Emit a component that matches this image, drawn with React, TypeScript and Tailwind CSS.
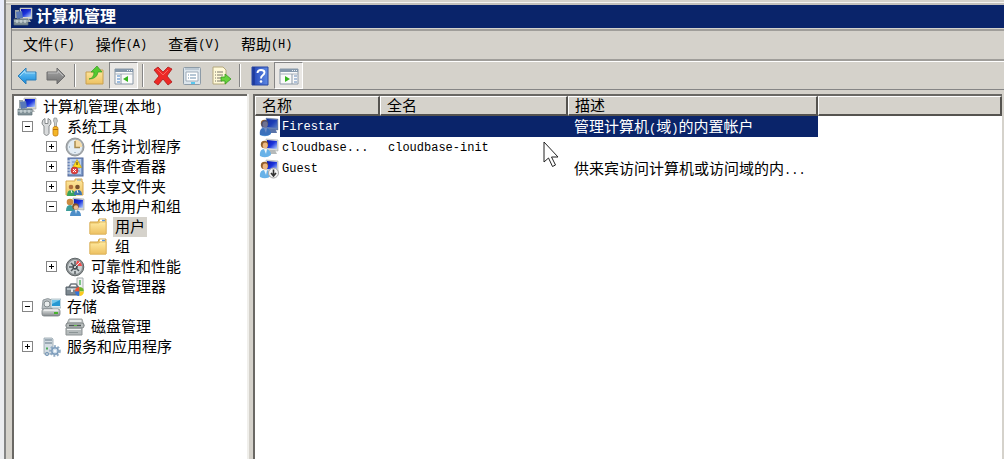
import type { ReactNode } from 'react'

const latin = "font-['Liberation_Mono','Noto_Sans_CJK_SC',monospace] text-[12px] leading-none"

function Svg({ children }: { children: ReactNode }) {
  return (
    <svg className="size-5 shrink-0" viewBox="0 0 20 20" fill="none" aria-hidden="true">
      {children}
    </svg>
  )
}

/* shared gradients */
function Defs() {
  return (
    <svg className="absolute size-0" aria-hidden="true">
      <defs>
        <linearGradient id="screen" x1="0" y1="0" x2="1" y2="1">
          <stop offset="0" stopColor="#0a14a8" />
          <stop offset=".5" stopColor="#1c34dc" />
          <stop offset="1" stopColor="#b8d4ff" />
        </linearGradient>
        <linearGradient id="blueArrow" x1="0" y1="0" x2="0" y2="1">
          <stop offset="0" stopColor="#7fd0f8" />
          <stop offset="1" stopColor="#1288dc" />
        </linearGradient>
        <linearGradient id="grayArrow" x1="0" y1="0" x2="0" y2="1">
          <stop offset="0" stopColor="#a8a8a8" />
          <stop offset="1" stopColor="#727272" />
        </linearGradient>
        <linearGradient id="folder" x1="0" y1="0" x2="0" y2="1">
          <stop offset="0" stopColor="#ffeaa0" />
          <stop offset="1" stopColor="#edc162" />
        </linearGradient>
        <linearGradient id="help" x1="0" y1="0" x2="1" y2="0">
          <stop offset="0" stopColor="#1d3aa0" />
          <stop offset=".2" stopColor="#2c50c0" />
          <stop offset="1" stopColor="#5f8ae4" />
        </linearGradient>
        <linearGradient id="metal" x1="0" y1="0" x2="0" y2="1">
          <stop offset="0" stopColor="#e8eaea" />
          <stop offset="1" stopColor="#848a8c" />
        </linearGradient>
      </defs>
    </svg>
  )
}

function ComputerIcon() {
  return (
    <Svg>
      <path d="M2 3h4v8H2z" fill="#9aa4a8" />
      <path d="M7 1l12 0v11L7 12z" fill="#d8d8d0" stroke="#a4a8a8" strokeWidth=".6" />
      <path d="M8 2l10 0v8L8 10z" fill="url(#screen)" />
      <path d="M10 12h6l2 3H9z" fill="#b8bcbc" />
      <path d="M3 5l6-1 1 7-6 1z" fill="#5878b8" />
      <path d="M1 12h14v6H1z" fill="#829298" stroke="#5e7076" strokeWidth=".7" />
      <path d="M1 14h14" stroke="#c8d4d8" />
      <path d="M4 13v3M8 13v3M12 13v3" stroke="#dce4e4" />
    </Svg>
  )
}

function ToolsIcon() {
  return (
    <Svg>
      <path
        d="M4 1.500v5h3v-5q3.500 1 3 4.500-.3 2-2 3v7.500q-2.500 4-5 0V9Q1 8 1 6q0-3.500 3-4.500z"
        fill="#d8dadb"
        stroke="#85898b"
      />
      <path d="M13 1h2.500l1 3-1 2v4h-2V6l-1-2z" fill="#c8cccc" stroke="#8a8e90" strokeWidth=".7" />
      <rect x="12" y="9.500" width="5" height="9.500" rx="2" fill="#f4b628" stroke="#c47c0c" strokeWidth=".8" />
      <path d="M12 12.500h5" stroke="#b87010" />
    </Svg>
  )
}

function ClockIcon() {
  return (
    <Svg>
      <circle cx="10" cy="10" r="9" fill="#a6acb0" stroke="#85898c" strokeWidth=".8" />
      <circle cx="10" cy="10" r="7.300" fill="#e4edf4" />
      <path d="M10 10V2.700a7.300 7.300 0 0 1 7.300 7.300z" fill="#f6dca6" />
      <path d="M10 4v6.500h5" stroke="#a88b50" strokeWidth="1.500" />
      <path d="M10 15v1M4 10h1" stroke="#7e98ac" />
    </Svg>
  )
}

function EventIcon() {
  return (
    <Svg>
      <rect x="3" y="1" width="15" height="18" fill="#7d99c8" stroke="#53699a" />
      <path d="M5 2h11v15H5z" fill="#bcd0ee" />
      <path d="M7 5h8M7 8h8M7 11h8M7 14h8" stroke="#7590c0" />
      <path d="M2 4h4M2 7h4M2 10h4M2 13h4M2 16h4" stroke="#e4e8ee" />
      <path d="M12 2.500l4.500 8h-9z" fill="#ffe020" stroke="#c89d10" strokeWidth=".7" />
      <path d="M12 5v3" stroke="#403000" />
      <circle cx="9.500" cy="13.500" r="3.500" fill="#e04444" stroke="#b02828" strokeWidth=".6" />
      <path d="M8 12l3 3M11 12l-3 3" stroke="#fff" />
    </Svg>
  )
}

function SharedIcon() {
  return (
    <Svg>
      <path d="M1 4h9V2h7v3h1v13H1z" fill="url(#folder)" stroke="#d7a74c" />
      <path d="M12 3h4" stroke="#699bd0" />
      <circle cx="6" cy="10" r="2.300" fill="#b06e3c" />
      <path d="M2 19q0-6 4-6t5 6z" fill="#39a35c" />
      <circle cx="12.500" cy="10" r="2.300" fill="#76502e" />
      <path d="M9 18q0-5 4-5t4 5z" fill="#3b76b4" />
      <path d="M6 13l1 3M12 13l1 3" stroke="#f4f4e8" />
    </Svg>
  )
}

function GroupIcon() {
  return (
    <Svg>
      <path d="M8 1l11 1v11l-11-1z" fill="#d4d6d4" stroke="#a0a4a4" strokeWidth=".6" />
      <path d="M9 2l9 1v8l-9-1z" fill="url(#screen)" />
      <circle cx="5" cy="5" r="3.300" fill="#cb8b42" />
      <path d="M1 14q0-6 4-6t5 6z" fill="#3b9c9a" />
      <circle cx="10.500" cy="9.500" r="3.200" fill="#84552e" />
      <circle cx="11" cy="10.500" r="2.200" fill="#efbd91" />
      <path d="M5 19q0-6 5.500-6t5.500 6z" fill="#4d8ec8" />
      <path d="M10 13l1 4 1-4z" fill="#eef4f8" />
    </Svg>
  )
}

function FolderIcon() {
  return (
    <Svg>
      <path d="M1 5h8l1-3h7v15H1z" fill="#f3cd70" stroke="#d3a548" />
      <path d="M11 3.500h5" stroke="#fff" strokeWidth="2" />
      <path d="M13 3.500h3" stroke="#5d98dc" strokeWidth="1.500" />
      <path d="M1 6h9l1-1h6v12H1z" fill="url(#folder)" stroke="#e0b65b" strokeWidth=".8" />
    </Svg>
  )
}

function GaugeIcon() {
  return (
    <Svg>
      <circle cx="10" cy="10" r="8.800" fill="#8b9193" stroke="#5e6466" />
      <circle cx="10" cy="10" r="7" fill="#ccd2d4" />
      <path d="M12 3.500a7 7 0 0 1 5 5.500h-4l-2-2z" fill="#f34c4c" />
      <path d="M10 4v3M4 10h3M6 6l2 2M6 14l2-2M10 17v-3M14 14l-2-2" stroke="#535b5f" strokeWidth="1.500" />
      <circle cx="10" cy="10" r="2.800" fill="#454c50" />
      <path d="M9 11l6-6" stroke="#e8ecec" />
      <circle cx="10" cy="10" r="1" fill="#d0d6d8" />
    </Svg>
  )
}

function DeviceIcon() {
  return (
    <Svg>
      <path d="M12 1h6v12h-6z" fill="#eef0f0" stroke="#a9afb2" />
      <path d="M15 3v5" stroke="#54b765" strokeWidth="1.500" />
      <path d="M4 10l2-3h5l2 3" stroke="#727a80" strokeWidth="1.500" />
      <path d="M1 10h13v8H1z" fill="#7d8890" stroke="#566068" />
      <path d="M2 11h11v2H2z" fill="#b3bdc4" />
      <path d="M7 12v3" stroke="#e9eded" strokeWidth="2" />
      <path d="M14.500 14.500V10a4.500 4.500 0 0 0-4.500 4.500z" fill="#ef5533" />
      <path d="M14.500 14.500V10a4.500 4.500 0 0 1 4.500 4.500z" fill="#6cb52d" />
      <path d="M14.500 14.500H10a4.500 4.500 0 0 0 4.500 4.500z" fill="#3375d8" />
      <path d="M14.500 14.500H19a4.500 4.500 0 0 1-4.500 4.500z" fill="#fbc91e" />
    </Svg>
  )
}

function StorageIcon() {
  return (
    <Svg>
      <path d="M2 3q5-3 9 0v9H1z" fill="#b8bfc2" stroke="#858e92" strokeWidth=".8" />
      <circle cx="6" cy="7" r="3" fill="#e8ecec" stroke="#838b8e" />
      <path d="M10 2h10v9H10z" fill="#dceaf0" stroke="#8aa4af" strokeWidth=".6" />
      <path d="M11 3h8v6h-8z" fill="#2498d2" />
      <path d="M11 3h8l-8 4z" fill="#72c8ed" />
      <rect x="1" y="12" width="18" height="7" rx="2" fill="url(#metal)" stroke="#777f81" strokeWidth=".8" />
      <path d="M3 13h14" stroke="#fff" />
      <path d="M13 16h4" stroke="#48b32e" strokeWidth="2" />
    </Svg>
  )
}

function DiskIcon() {
  return (
    <Svg>
      <path d="M4 2h13l2 7H1z" fill="#c9cdcd" stroke="#8a9090" strokeWidth=".8" />
      <path d="M5 4h11" stroke="#f3f5f5" strokeWidth="1.500" />
      <rect x="1" y="6" width="18" height="5" rx="2" fill="#b8bdbd" stroke="#7d8384" />
      <path d="M4 8.500h12" stroke="#4d5556" strokeWidth="1.500" />
      <path d="M9 8.500h3" stroke="#65c246" />
      <path d="M1 11h16v7H1z" fill="#b4babb" stroke="#8b9192" />
      <path d="M2 12.500h14" stroke="#eff1f1" />
      <path d="M4 15.500h9" stroke="#8b9495" />
    </Svg>
  )
}

function ServicesIcon() {
  return (
    <Svg>
      <path d="M3 1h8l1 1v15H3z" fill="#d4dde3" stroke="#95a3ac" strokeWidth=".8" />
      <path d="M4 3h7M4 6h7" stroke="#647987" />
      <path d="M5 11.500h2" stroke="#4aab58" strokeWidth="2" />
      <circle cx="14" cy="14" r="4.800" stroke="#8faac4" strokeWidth="2" strokeDasharray="2 1.500" />
      <circle cx="14" cy="14" r="3.200" fill="#d3e1ed" stroke="#7d9cbb" strokeWidth="1.500" />
      <circle cx="14" cy="14" r="1" fill="#fff" />
      <circle cx="6" cy="17" r="1.700" fill="#b2c4d2" stroke="#7d9cbb" />
    </Svg>
  )
}

function UserIcon({ kind }: { kind?: 'selected' | 'disabled' }) {
  return (
    <Svg>
      <path d="M7 1l12 1v11L7 12z" fill="#d8dad8" stroke="#a8acac" strokeWidth=".6" />
      <path d="M8 2l10 1v8L8 10z" fill="url(#screen)" />
      <path d="M11 12h5l2 4h-8z" fill="#b5b9b9" />
      <circle cx="5.500" cy="6.500" r="3.700" fill="#94602c" />
      <ellipse cx="6.200" cy="7.500" rx="2.500" ry="3" fill="#edb780" />
      <path d="M1 18q-1-7 5-7 6 0 6 6-5 4-11 1z" fill="#68b2e8" />
      <path d="M5 11l2 5 1-5z" fill="#f1f7fb" />
      {kind === 'selected' && (
        <path
          d="M7 1l12 1v11l-2 0 1 3h-6q-1 4-11 2-1-5 2-7-2-5 1-7l3-1z"
          fill="#1c449c"
          fillOpacity=".6"
        />
      )}
      {kind === 'disabled' && (
        <>
          <circle cx="14.500" cy="14" r="5" fill="#f2f2f2" stroke="#a7a7a7" />
          <path d="M14.500 10.500v6M12 14l2.500 3 2.500-3" stroke="#333" strokeWidth="1.600" />
        </>
      )}
    </Svg>
  )
}

function PanelIcon({ right }: { right?: boolean }) {
  return (
    <Svg>
      <path d="M1 3h18v15H1z" fill="#fafafa" stroke="#8a98a6" />
      <path d="M1 3h18v3H1z" fill="#8598ab" />
      <path d="M1 8h18" stroke="#a8b2bc" />
      <path d="M13 4.500h1M15 4.500h1M17 4.500h1" stroke="#e8eef4" />
      {right ? (
        <>
          <path d="M13 8v10" stroke="#8a98a6" />
          <path d="M15 10h3M15 13h3M15 16h3" stroke="#6488b8" />
          <path d="M6 10v6l5-3z" fill="#36b51e" />
        </>
      ) : (
        <>
          <path d="M7 8v10" stroke="#8a98a6" />
          <path d="M3 10h3M3 13h3M3 16h3" stroke="#3f7fc4" />
          <path d="M14 10v6l-5-3z" fill="#36b51e" />
        </>
      )}
    </Svg>
  )
}

function ToolButton({ label, pressed, children }: { label: string; pressed?: boolean; children: ReactNode }) {
  return (
    <button
      type="button"
      aria-label={label}
      className={
        'flex h-[27px] w-[29px] items-center justify-center border ' +
        (pressed
          ? 'border-t-[#858585] border-l-[#858585] border-r-white border-b-white bg-[#e9e7e4]'
          : 'border-transparent')
      }
    >
      {children}
    </button>
  )
}

function Separator() {
  return (
    <div className="flex w-[10px] justify-center">
      <div className="h-[23px] w-[2px] border-l border-[#858585] bg-white" />
    </div>
  )
}

type Node = { name: ReactNode; icon: ReactNode; open?: boolean; selected?: boolean; children?: Node[] }

const tree: Node[] = [
  {
    name: '系统工具',
    icon: <ToolsIcon />,
    open: true,
    children: [
      { name: '任务计划程序', icon: <ClockIcon />, open: false },
      { name: '事件查看器', icon: <EventIcon />, open: false },
      { name: '共享文件夹', icon: <SharedIcon />, open: false },
      {
        name: '本地用户和组',
        icon: <GroupIcon />,
        open: true,
        children: [
          { name: '用户', icon: <FolderIcon />, selected: true },
          { name: '组', icon: <FolderIcon /> },
        ],
      },
      { name: '可靠性和性能', icon: <GaugeIcon />, open: false },
      { name: '设备管理器', icon: <DeviceIcon /> },
    ],
  },
  {
    name: '存储',
    icon: <StorageIcon />,
    open: true,
    children: [{ name: '磁盘管理', icon: <DiskIcon /> }],
  },
  { name: '服务和应用程序', icon: <ServicesIcon />, open: false },
]

function Branch({ nodes }: { nodes: Node[] }) {
  return (
    <ul>
      {nodes.map((n, i) => (
        <li key={i}>
          <div className="flex h-5 items-center">
            <span className="flex w-[19px] shrink-0">
              {n.open !== undefined && (
                <button type="button" aria-label={n.open ? '折叠' : '展开'} aria-expanded={n.open}>
                  <svg className="size-3" viewBox="0 0 12 12" fill="none" shapeRendering="crispEdges">
                    <path d="M.5.5h10v10H.5z" stroke="#858585" fill="#fff" />
                    <path d={n.open ? 'M3 5.500h5' : 'M3 5.500h5M5.500 3v5'} stroke="#000" />
                  </svg>
                </button>
              )}
            </span>
            {n.icon}
            <a href="#" className={'ml-1 px-[2px] whitespace-nowrap ' + (n.selected ? 'bg-[#d5d2cb]' : '')}>
              {n.name}
            </a>
          </div>
          {n.children && (
            <div className="pl-6">
              <Branch nodes={n.children} />
            </div>
          )}
        </li>
      ))}
    </ul>
  )
}

const menus = [
  ['文件', 'F'],
  ['操作', 'A'],
  ['查看', 'V'],
  ['帮助', 'H'],
]

const users = [
  {
    name: 'Firestar',
    full: '',
    desc: (
      <>
        管理计算机<span className={latin}>(</span>域<span className={latin}>)</span>的内置帐户
      </>
    ),
    icon: <UserIcon kind="selected" />,
    selected: true,
  },
  { name: 'cloudbase...', full: 'cloudbase-init', desc: '', icon: <UserIcon /> },
  {
    name: 'Guest',
    full: '',
    desc: (
      <>
        供来宾访问计算机或访问域的内<span className={latin}>...</span>
      </>
    ),
    icon: <UserIcon kind="disabled" />,
  },
]

const th =
  'h-5 border-t border-r-2 border-b-2 border-l border-t-white border-l-white border-r-[#55534f] border-b-[#55534f] bg-[#d5d2cb] p-0 pl-[6px] text-left leading-[17px] font-normal'

export default function App() {
  return (
    <div className="flex h-screen overflow-hidden bg-[#ecedf0] font-['Liberation_Sans','Noto_Sans_CJK_SC',sans-serif] text-[15px] leading-5 text-black">
      <Defs />
      <div className="h-20 w-1 shrink-0 rounded-br bg-[#e9ecfb]" />
      <div className="flex min-w-0 flex-1 flex-col border-l-2 border-[#858585] bg-[#d5d2cb]">
        <div className="h-[5px] border-y-2 border-t-[#d5d2cb] border-b-[#c4c1bc] bg-[#f4f3f0]" />
        <header className="ml-[5px] flex h-[23px] items-center bg-[#0a246a] pl-[2px] text-white">
          <ComputerIcon />
          <h1 className="ml-[3px] text-[16px] font-bold">计算机管理</h1>
        </header>

        <div className="ml-[5px] border-l border-[#858585]">
          <nav className="mt-px flex h-8 items-center gap-[21px] border-t-2 border-b-2 border-t-[#a09e9a] border-b-[#a09e9a] pl-[11px]">
            {menus.map(([name, key]) => (
              <button key={key} type="button" className="flex items-center">
                {name}
                <span className={latin}>({key})</span>
              </button>
            ))}
          </nav>
          <div className="flex h-[29px] items-center border-t border-b border-t-white border-b-[#858585]">
            <ToolButton label="后退">
              <Svg>
                <path d="M1 10l8-8v4h10v8H9v4z" fill="url(#blueArrow)" stroke="#2e7fb8" strokeLinejoin="round" />
                <path d="M3 10l5-5v2h10" stroke="#b8e6fc" strokeWidth=".8" />
              </Svg>
            </ToolButton>
            <ToolButton label="前进">
              <Svg>
                <path d="M19 10l-8-8v4H1v8h10v4z" fill="url(#grayArrow)" stroke="#6d6d6d" strokeLinejoin="round" />
                <path d="M2 7h10V5l5 5" stroke="#c9c9c9" strokeWidth=".8" />
              </Svg>
            </ToolButton>
            <Separator />
            <ToolButton label="上移">
              <Svg>
                <path d="M1 6h8l1-2h8v14H1z" fill="url(#folder)" stroke="#c9a050" />
                <path d="M4 13q5-1 5-7H6l6-6 5 6h-4q-1 7-9 7z" fill="#54ca30" stroke="#369922" strokeWidth=".7" />
              </Svg>
            </ToolButton>
            <ToolButton label="显示/隐藏控制台树" pressed>
              <PanelIcon />
            </ToolButton>
            <Separator />
            <ToolButton label="删除">
              <Svg>
                <path
                  d="M1 4l4-3 5 5 5-5 4 2-5 7 5 6-4 3-5-6-5 6-4-3 5-6z"
                  fill="#ed2926"
                  stroke="#a91c1c"
                  strokeWidth=".8"
                />
                <path d="M4 3l6 6 5-5" stroke="#f8665e" />
              </Svg>
            </ToolButton>
            <ToolButton label="属性">
              <Svg>
                <rect x="1.500" y="1.500" width="17" height="17" rx="1" fill="#dce5ec" stroke="#8d9ba7" />
                <path d="M3 3h14" stroke="#9cacba" />
                <path d="M4 6h12v9H4z" fill="#fff" stroke="#9eabb8" />
                <path d="M6 9h1M8 9h6M6 12h1M8 12h6" stroke="#6d8eab" />
                <path d="M9 17h4" stroke="#2dbcf0" strokeWidth="1.500" />
              </Svg>
            </ToolButton>
            <ToolButton label="导出列表">
              <Svg>
                <path d="M2 1h10l3 3v14H2z" fill="#fff9d8" stroke="#b4a87c" />
                <path d="M4 6h1M6 6h6M4 9h1M6 9h6M4 12h1M6 12h5M4 15h1M6 15h5" stroke="#787568" />
                <path d="M10 11h4V8l6 5-6 5v-3h-4z" fill="#67d33c" stroke="#379b20" strokeWidth=".8" />
              </Svg>
            </ToolButton>
            <Separator />
            <ToolButton label="帮助">
              <Svg>
                <path d="M2 1h16v18H2z" fill="url(#help)" stroke="#2847a2" />
                <path d="M4 1v18" stroke="#1b3389" />
                <path
                  d="M7.500 7q0-3 3.500-3t3.500 2.500Q14.500 8 12.500 9.500 11 10.500 11 12.500"
                  stroke="#fff"
                  strokeWidth="1.900"
                />
                <circle cx="11" cy="15.500" r="1.300" fill="#fff" />
              </Svg>
            </ToolButton>
            <ToolButton label="显示/隐藏操作窗格" pressed>
              <PanelIcon right />
            </ToolButton>
          </div>
        </div>

        <div className="mt-[4px] ml-[6px] flex min-h-0 flex-1 pr-[2px]">
          <aside className="w-[235px] shrink-0 border-t-2 border-l-2 border-[#6a6864] bg-white">
            <div className="flex h-[21px] items-center pl-[3px]">
              <ComputerIcon />
              <a href="#" className="ml-[6px] whitespace-nowrap">
                计算机管理<span className={latin}>(</span>本地<span className={latin}>)</span>
              </a>
            </div>
            <div className="pl-2">
              <Branch nodes={tree} />
            </div>
          </aside>
          <div className="w-[6px] shrink-0 border-l-2 border-[#f0efeb]" />
          <main className="relative min-w-0 flex-1 border-t-2 border-l-2 border-[#6a6864] bg-white">
            <table className="w-full table-fixed border-separate border-spacing-0">
              <colgroup>
                <col className="w-[125px]" />
                <col className="w-[188px]" />
                <col className="w-[250px]" />
                <col />
              </colgroup>
              <thead>
                <tr>
                  <th className={th}>名称</th>
                  <th className={th}>全名</th>
                  <th className={th}>描述</th>
                  <th className={th + ' border-r-0'} aria-label="空" />
                </tr>
              </thead>
              <tbody>
                {users.map((u) => (
                  <tr key={u.name} className={'h-[21px] whitespace-nowrap ' + (u.selected ? 'text-white' : '')}>
                    <td className="p-0">
                      <div className="flex h-[21px] items-center pl-1">
                        {u.icon}
                        <span
                          className={
                            'ml-px flex h-full flex-1 items-center pl-[2px] ' +
                            latin +
                            (u.selected ? ' bg-[#0a246a]' : '')
                          }
                        >
                          {u.name}
                        </span>
                      </div>
                    </td>
                    <td className={'p-0 pl-2 ' + latin + (u.selected ? ' bg-[#0a246a]' : '')}>{u.full}</td>
                    <td className={'p-0 pl-[6px] ' + (u.selected ? 'bg-[#0a246a]' : '')}>{u.desc}</td>
                    <td />
                  </tr>
                ))}
              </tbody>
            </table>
            <svg
              className="absolute top-[45px] left-[288px] h-[27px] w-[16px]"
              viewBox="0 0 16 27"
              fill="none"
              aria-hidden="true"
            >
              <path d="M1 1v20l4.500-4 4 8.500 3-1.500-4-8H15z" fill="#fff" stroke="#222" />
            </svg>
          </main>
        </div>
      </div>
    </div>
  )
}
